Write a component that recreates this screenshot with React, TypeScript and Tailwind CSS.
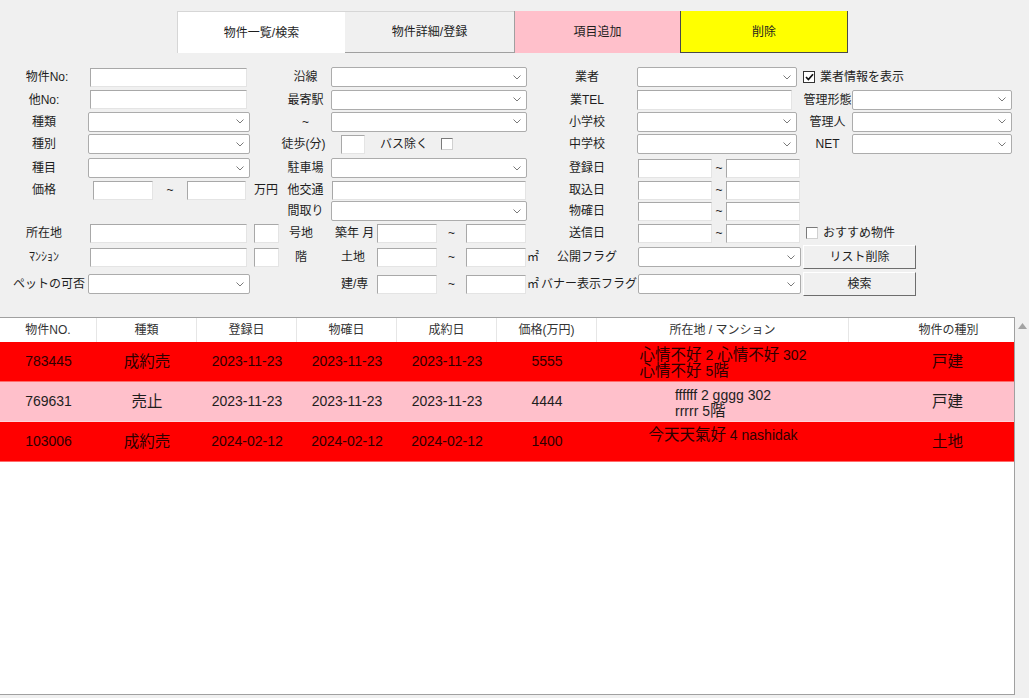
import type { ReactNode } from "react";

// small helpers for the WinForms-like search panel
function Lbl({ className = "", children }: { className?: string; children?: ReactNode }) {
  return (
    <div className={`shrink-0 whitespace-nowrap text-center text-[12px] text-[#1e1e1e] ${className}`}>
      {children}
    </div>
  );
}

function Box({ className = "" }: { className?: string }) {
  return (
    <div
      className={`h-[19px] shrink-0 border border-[#e4e4e4] border-l-[#a8a8a8] border-t-[#a8a8a8] bg-white ${className}`}
    />
  );
}

function Sel({ className = "" }: { className?: string }) {
  return (
    <div
      className={`flex h-[20px] shrink-0 items-center justify-end rounded-[2px] border border-[#acacac] bg-white pr-[5px] ${className}`}
    >
      <svg width="8" height="5" viewBox="0 0 8 5" fill="none">
        <path d="M0.5 0.5 L4 4 L7.5 0.5" stroke="#7a7a7a" strokeWidth="1" />
      </svg>
    </div>
  );
}

function Check({ checked = false, className = "" }: { checked?: boolean; className?: string }) {
  return (
    <div
      className={`flex h-[12px] w-[12px] shrink-0 items-center justify-center border bg-white ${
        checked ? "border-[#333333]" : "border-[#7a7a7a] border-b-[#d0d0d0] border-r-[#d0d0d0]"
      } ${className}`}
    >
      {checked && (
        <svg width="9" height="8" viewBox="0 0 9 8" fill="none">
          <path d="M1 4 L3.4 6.5 L8 1.2" stroke="#111" strokeWidth="1.7" />
        </svg>
      )}
    </div>
  );
}

function Btn({ children }: { children: ReactNode }) {
  return (
    <div className="flex h-[24px] w-[113px] shrink-0 items-center justify-center border border-b-[#6d6d6d] border-l-white border-r-[#6d6d6d] border-t-white bg-[#f0f0f0] text-[12px] text-[#1e1e1e]">
      {children}
    </div>
  );
}

function DateRange() {
  return (
    <>
      <Box className="ml-[1px] w-[74px]" />
      <Lbl className="w-[14px] text-[11px]">~</Lbl>
      <Box className="w-[74px]" />
    </>
  );
}

const J = ({ children }: { children: ReactNode }) => <span className="text-[15.5px]">{children}</span>;

const cols = [
  { title: "物件NO.", w: "w-[97px]" },
  { title: "種類", w: "w-[100px]" },
  { title: "登録日", w: "w-[100px]" },
  { title: "物確日", w: "w-[100px]" },
  { title: "成約日", w: "w-[100px]" },
  { title: "価格(万円)", w: "w-[100px]" },
  { title: "所在地 / マンション", w: "w-[252px]" },
];

const rows = [
  {
    no: "783445",
    kind: "成約売",
    reg: "2023-11-23",
    chk: "2023-11-23",
    done: "2023-11-23",
    price: "5555",
    type: "戸建",
    pink: false,
    addr: (
      <>
        <J>心情不好</J> 2 <J>心情不好</J> 302
        <br />
        <J>心情不好</J> 5<J>階</J>
      </>
    ),
  },
  {
    no: "769631",
    kind: "売止",
    reg: "2023-11-23",
    chk: "2023-11-23",
    done: "2023-11-23",
    price: "4444",
    type: "戸建",
    pink: true,
    addr: (
      <>
        ffffff 2 gggg 302
        <br />
        rrrrr 5<J>階</J>
      </>
    ),
  },
  {
    no: "103006",
    kind: "成約売",
    reg: "2024-02-12",
    chk: "2024-02-12",
    done: "2024-02-12",
    price: "1400",
    type: "土地",
    pink: false,
    addr: (
      <>
        <J>今天天氣好</J> 4 nashidak
      </>
    ),
  },
];

export default function App() {
  return (
    <div className="h-[698px] w-[1029px] overflow-hidden bg-[#f0f0f0] font-['Liberation_Sans','Noto_Sans_CJK_JP',sans-serif] text-[#1e1e1e]">
      {/* tabs */}
      <div className="flex pl-[177px] pt-[11px] text-[12px]">
        <div className="flex h-[42px] w-[168px] items-center justify-center border-l border-t border-[#d6d6d6] bg-white">
          物件一覧/検索
        </div>
        <div className="flex h-[42px] w-[169px] items-center justify-center border-b border-t border-[#d6d6d6] border-b-[#a0a0a0] bg-[#f0f0f0]">
          物件詳細/登録
        </div>
        <div className="flex h-[42px] w-[166px] items-center justify-center border-l border-[#a0a0a0] bg-[#ffc0cb]">
          項目追加
        </div>
        <div className="flex h-[42px] w-[168px] items-center justify-center border-b border-l border-r border-[#4a4a4a] bg-[#ffff00]">
          削除
        </div>
      </div>

      {/* search form */}
      <div className="mt-[13px]">
        {/* row 1 */}
        <div className="flex h-[22px] items-center">
          <div className="flex w-[250px] shrink-0 items-center">
            <Lbl className="w-[88px] pl-[6px]">物件No:</Lbl>
            <Box className="ml-[2px] w-[157px]" />
          </div>
          <div className="flex w-[277px] shrink-0 items-center">
            <Lbl className="ml-[30px] w-[51px]">沿線</Lbl>
            <Sel className="w-[196px]" />
          </div>
          <div className="flex w-[276px] shrink-0 items-center">
            <Lbl className="ml-[10px] w-[100px]">業者</Lbl>
            <Sel className="w-[160px]" />
          </div>
          <div className="flex items-center">
            <Check checked />
            <Lbl className="ml-[5px]">業者情報を表示</Lbl>
          </div>
        </div>

        {/* row 2 */}
        <div className="flex h-[23px] items-center">
          <div className="flex w-[250px] shrink-0 items-center">
            <Lbl className="w-[88px]">他No:</Lbl>
            <Box className="ml-[2px] w-[157px]" />
          </div>
          <div className="flex w-[277px] shrink-0 items-center">
            <Lbl className="ml-[30px] w-[51px]">最寄駅</Lbl>
            <Sel className="w-[196px]" />
          </div>
          <div className="flex w-[276px] shrink-0 items-center">
            <Lbl className="ml-[10px] w-[100px]">業TEL</Lbl>
            <Box className="h-[20px] w-[155px]" />
          </div>
          <div className="flex items-center">
            <Lbl className="w-[49px]">管理形態</Lbl>
            <Sel className="w-[160px]" />
          </div>
        </div>

        {/* row 3 */}
        <div className="flex h-[21px] items-center">
          <div className="flex w-[250px] shrink-0 items-center">
            <Lbl className="w-[88px]">種類</Lbl>
            <Sel className="w-[162px]" />
          </div>
          <div className="flex w-[277px] shrink-0 items-center">
            <Lbl className="ml-[30px] w-[51px]">~</Lbl>
            <Sel className="w-[196px]" />
          </div>
          <div className="flex w-[276px] shrink-0 items-center">
            <Lbl className="ml-[10px] w-[100px]">小学校</Lbl>
            <Sel className="w-[160px]" />
          </div>
          <div className="flex items-center">
            <Lbl className="w-[49px]">管理人</Lbl>
            <Sel className="w-[160px]" />
          </div>
        </div>

        {/* row 4 */}
        <div className="flex h-[24px] items-center">
          <div className="flex w-[250px] shrink-0 items-center">
            <Lbl className="w-[88px]">種別</Lbl>
            <Sel className="w-[162px]" />
          </div>
          <div className="flex w-[277px] shrink-0 items-center">
            <Lbl className="ml-[28px] w-[51px]">徒歩(分)</Lbl>
            <Box className="ml-[12px] w-[24px]" />
            <Lbl className="ml-[15px] text-[11.5px]">バス除く</Lbl>
            <Check className="ml-[13px]" />
          </div>
          <div className="flex w-[276px] shrink-0 items-center">
            <Lbl className="ml-[10px] w-[100px]">中学校</Lbl>
            <Sel className="w-[160px]" />
          </div>
          <div className="flex items-center">
            <Lbl className="w-[49px]">NET</Lbl>
            <Sel className="w-[160px]" />
          </div>
        </div>

        {/* row 5 */}
        <div className="flex h-[24px] items-center">
          <div className="flex w-[250px] shrink-0 items-center">
            <Lbl className="w-[88px]">種目</Lbl>
            <Sel className="w-[162px]" />
          </div>
          <div className="flex w-[277px] shrink-0 items-center">
            <Lbl className="ml-[30px] w-[51px]">駐車場</Lbl>
            <Sel className="w-[196px]" />
          </div>
          <div className="flex w-[276px] shrink-0 items-center">
            <Lbl className="ml-[10px] w-[100px]">登録日</Lbl>
            <DateRange />
          </div>
        </div>

        {/* row 6 */}
        <div className="flex h-[20px] items-center">
          <div className="flex w-[250px] shrink-0 items-center">
            <Lbl className="w-[88px]">価格</Lbl>
            <Box className="ml-[5px] w-[60px]" />
            <Lbl className="w-[34px] text-[11px]">~</Lbl>
            <Box className="w-[59px]" />
          </div>
          <div className="flex w-[277px] shrink-0 items-center">
            <Lbl className="ml-[4px] w-[26px] text-left">万円</Lbl>
            <Lbl className="w-[51px]">他交通</Lbl>
            <Box className="ml-[1px] w-[194px]" />
          </div>
          <div className="flex w-[276px] shrink-0 items-center">
            <Lbl className="ml-[10px] w-[100px]">取込日</Lbl>
            <DateRange />
          </div>
        </div>

        {/* row 7 */}
        <div className="flex h-[22px] items-center">
          <div className="w-[250px] shrink-0" />
          <div className="flex w-[277px] shrink-0 items-center">
            <Lbl className="ml-[30px] w-[51px]">間取り</Lbl>
            <Sel className="w-[196px]" />
          </div>
          <div className="flex w-[276px] shrink-0 items-center">
            <Lbl className="ml-[10px] w-[100px]">物確日</Lbl>
            <DateRange />
          </div>
        </div>

        {/* row 8 */}
        <div className="flex h-[22px] items-center">
          <div className="flex w-[250px] shrink-0 items-center">
            <Lbl className="w-[88px]">所在地</Lbl>
            <Box className="ml-[2px] w-[157px]" />
          </div>
          <div className="flex w-[277px] shrink-0 items-center">
            <Box className="ml-[4px] w-[25px]" />
            <Lbl className="w-[44px]">号地</Lbl>
            <Lbl className="ml-[12px] w-[42px] text-left">築年 月</Lbl>
            <Box className="w-[60px]" />
            <Lbl className="w-[29px] text-[11px]">~</Lbl>
            <Box className="w-[60px]" />
          </div>
          <div className="flex w-[276px] shrink-0 items-center">
            <Lbl className="ml-[10px] w-[100px]">送信日</Lbl>
            <DateRange />
          </div>
          <div className="flex items-center">
            <Check className="ml-[3px]" />
            <Lbl className="ml-[5px]">おすすめ物件</Lbl>
          </div>
        </div>

        {/* row 9 */}
        <div className="flex h-[26px] items-center">
          <div className="flex w-[250px] shrink-0 items-center">
            <Lbl className="w-[88px] text-[9px]">ﾏﾝｼｮﾝ</Lbl>
            <Box className="ml-[2px] w-[157px]" />
          </div>
          <div className="flex w-[277px] shrink-0 items-center">
            <Box className="ml-[4px] w-[25px]" />
            <Lbl className="w-[44px]">階</Lbl>
            <Lbl className="ml-[12px] w-[42px] pl-[6px] text-left">土地</Lbl>
            <Box className="w-[60px]" />
            <Lbl className="w-[29px] text-[11px]">~</Lbl>
            <Box className="w-[60px]" />
          </div>
          <div className="flex w-[276px] shrink-0 items-center">
            <Lbl className="w-[10px] text-[10px]">㎡</Lbl>
            <Lbl className="w-[100px]">公開フラグ</Lbl>
            <Sel className="ml-[1px] w-[163px]" />
          </div>
          <Btn>リスト削除</Btn>
        </div>

        {/* row 10 */}
        <div className="flex h-[28px] items-center">
          <div className="flex w-[250px] shrink-0 items-center">
            <Lbl className="w-[88px] pl-[10px]">ペットの可否</Lbl>
            <Sel className="w-[162px]" />
          </div>
          <div className="flex w-[277px] shrink-0 items-center">
            <Lbl className="ml-[85px] w-[42px] pl-[6px] text-left">建/専</Lbl>
            <Box className="w-[60px]" />
            <Lbl className="w-[29px] text-[11px]">~</Lbl>
            <Box className="w-[60px]" />
          </div>
          <div className="flex w-[276px] shrink-0 items-center">
            <Lbl className="w-[10px] text-[10px]">㎡</Lbl>
            <Lbl className="w-[100px] pl-[4px]">バナー表示フラグ</Lbl>
            <Sel className="ml-[1px] w-[163px]" />
          </div>
          <Btn>検索</Btn>
        </div>
      </div>

      {/* result grid */}
      <div className="mt-[19px] flex">
        <div className="h-[378px] w-[1015px] shrink-0 border-b border-r border-t border-[#a0a0a0] bg-white">
          <div className="flex h-[24px] text-[12px] text-[#333333]">
            {cols.map((c) => (
              <div key={c.title} className={`${c.w} flex shrink-0 items-center justify-center border-r border-[#e6e6e6]`}>
                {c.title}
              </div>
            ))}
            <div className="flex flex-1 items-center justify-center pl-[34px]">物件の種別</div>
          </div>
          {rows.map((r) => (
            <div
              key={r.no}
              className={`flex h-[40px] border-b text-[14px] ${
                r.pink ? "border-[#ffd3da] bg-[#ffc0cb] text-[#1e1e1e]" : "border-[#ff6b6b] bg-[#ff0000] text-[#2e0000]"
              }`}
            >
              <div className="flex w-[97px] shrink-0 items-center justify-center">{r.no}</div>
              <div className="flex w-[100px] shrink-0 items-center justify-center">
                <J>{r.kind}</J>
              </div>
              <div className="flex w-[100px] shrink-0 items-center justify-center">{r.reg}</div>
              <div className="flex w-[100px] shrink-0 items-center justify-center">{r.chk}</div>
              <div className="flex w-[100px] shrink-0 items-center justify-center">{r.done}</div>
              <div className="flex w-[100px] shrink-0 items-center justify-center">{r.price}</div>
              <div className="flex w-[252px] shrink-0 justify-center pt-[5px]">
                <div className="text-left leading-[16px]">{r.addr}</div>
              </div>
              <div className="flex flex-1 items-center justify-center pl-[32px]">
                <J>{r.type}</J>
              </div>
            </div>
          ))}
        </div>
        <div className="flex w-[14px] shrink-0 justify-center pt-[6px]">
          <svg width="9" height="6" viewBox="0 0 9 6">
            <polygon points="4.5,0 9,6 0,6" fill="#a3a3a3" />
          </svg>
        </div>
      </div>
    </div>
  );
}
